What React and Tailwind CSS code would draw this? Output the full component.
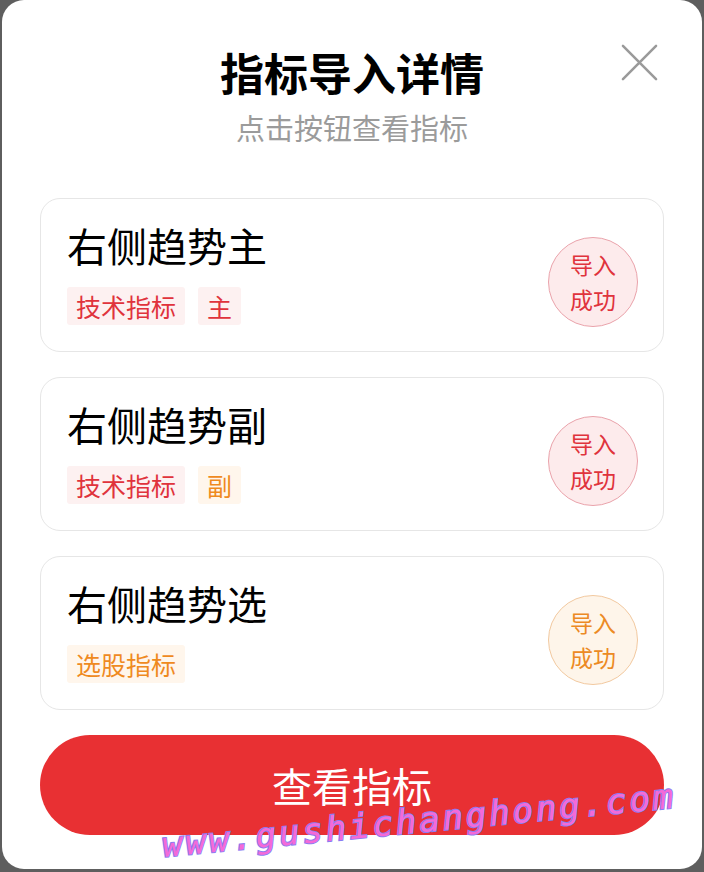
import React from "react";

const cards = [
  {
    title: "右侧趋势主",
    tags: [
      { t: "技术指标", c: "red" },
      { t: "主", c: "red" },
    ],
    badge: "red",
  },
  {
    title: "右侧趋势副",
    tags: [
      { t: "技术指标", c: "red" },
      { t: "副", c: "orange" },
    ],
    badge: "red",
  },
  {
    title: "右侧趋势选",
    tags: [{ t: "选股指标", c: "orange" }],
    badge: "orange",
  },
];

function Tag({ t, c }) {
  const cls =
    c === "red"
      ? "bg-[#fdf1f1] text-[#e0333c]"
      : "bg-[#fff6ec] text-[#ef8a1f]";
  return (
    <span className={`h-[38px] px-[9px] flex items-center text-[25px] leading-none rounded-[3px] ${cls}`}>
      {t}
    </span>
  );
}

function Badge({ c }) {
  const cls =
    c === "red"
      ? "bg-[#fdebec] border-[#eaa3ab] text-[#e0333c]"
      : "bg-[#fef5ea] border-[#f2c9a0] text-[#ec8a24]";
  return (
    <div
      className={`mt-[14px] w-[90px] h-[90px] rounded-full border flex flex-col items-center justify-center text-[23px] leading-[35px] ${cls}`}
    >
      <span>导入</span>
      <span>成功</span>
    </div>
  );
}

export default function App() {
  return (
    <div
      className="w-[704px] h-[872px] bg-[#5e5e5e] px-[2px] pb-[3px] overflow-hidden"
      style={{ fontFamily: '"Noto Sans CJK SC", "Noto Sans", sans-serif' }}
    >
      <div className="relative h-full bg-white rounded-[22px] flex flex-col px-[38px]">
        <button className="absolute right-[44px] top-[44px] w-[37px] h-[37px]">
          <svg viewBox="0 0 38 38" className="w-full h-full">
            <path d="M2 2 L36 36 M36 2 L2 36" stroke="#9a9a9a" strokeWidth="2.6" strokeLinecap="round" />
          </svg>
        </button>
        <div className="pt-[45px] text-center text-[44px] leading-[54px] font-bold text-black">
          指标导入详情
        </div>
        <div className="mt-[9px] text-center text-[29px] leading-[38px] text-[#9b9b9b]">
          点击按钮查看指标
        </div>
        <div className="mt-[52px] flex flex-col gap-[25px]">
          {cards.map((card) => (
            <div
              key={card.title}
              className="h-[154px] rounded-[20px] border border-[#e6e6e6] flex items-start justify-between pl-[26px] pr-[25px]"
            >
              <div className="flex flex-col gap-[18px] pt-[22px]">
                <div className="text-[40px] leading-[48px] text-black">{card.title}</div>
                <div className="flex gap-[13px]">
                  {card.tags.map((tg) => (
                    <Tag key={tg.t} {...tg} />
                  ))}
                </div>
              </div>
              <div className="self-center">
                <Badge c={card.badge} />
              </div>
            </div>
          ))}
        </div>
        <button className="mt-[25px] h-[100px] w-full rounded-full bg-[#e83033] text-white text-[40px] leading-none flex items-center justify-center">
          查看指标
        </button>
        <div
          className="absolute left-[160px] top-[828px] origin-left rotate-[-5.5deg] text-[34px] leading-[34px] italic tracking-[3px] text-[#f46ad8] [-webkit-text-stroke:2px_#8b7cf2] [paint-order:stroke_fill] pointer-events-none whitespace-nowrap"
          style={{ fontFamily: '"DejaVu Sans Mono", monospace' }}
        >
          www.gushichanghong.com
        </div>
      </div>
    </div>
  );
}
